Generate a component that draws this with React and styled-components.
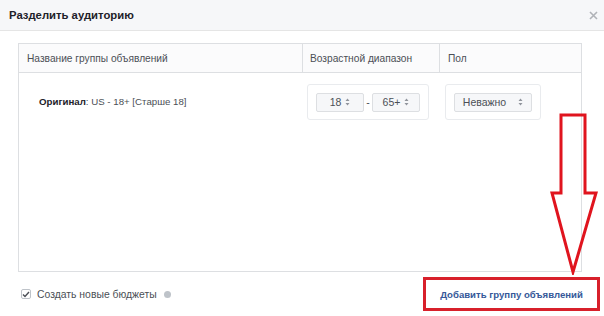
import React from "react";
import styled, { createGlobalStyle } from "styled-components";

const Global = createGlobalStyle`
  html, body { margin: 0; padding: 0; background: #fff; }
  body { font-family: "Liberation Sans", Arial, sans-serif; color: #4b4f56; }
  * { box-sizing: border-box; }
`;

const Dialog = styled.div`
  position: relative;
  width: 604px;
  height: 316px;
  background: #fff;
  display: flex;
  flex-direction: column;
  overflow: hidden;
`;

const Header = styled.div`
  height: 31px;
  flex: none;
  background: #f6f7f9;
  border-bottom: 1px solid #e5e5e5;
  display: flex;
  align-items: center;
  justify-content: space-between;
  padding: 0 6px 0 9px;
`;

const Title = styled.div`
  font-size: 11.3px;
  font-weight: bold;
  color: #1d2129;
`;

const Close = styled.div`
  width: 10px;
  height: 10px;
  display: flex;
  align-items: center;
  justify-content: center;
`;

const Body = styled.div`
  flex: none;
  padding: 12px 22px 0 18px;
`;

const Table = styled.div`
  height: 229px;
  border: 1px solid #dddfe2;
  display: grid;
  grid-template-columns: 283px 137px 1fr;
  grid-template-rows: 29px 1fr;
`;

const HeadCell = styled.div`
  display: flex;
  align-items: center;
  padding-left: ${(p) => p.$pad}px;
  font-size: 10.2px;
  color: #4b4f56;
  border-bottom: 1px solid #dddfe2;
  border-left: ${(p) => (p.$first ? "none" : "1px solid #dddfe2")};
  background: #fbfbfc;
`;

const Cell = styled.div`
  padding: 11px 0 0 ${(p) => p.$pad}px;
`;

const NameText = styled.div`
  font-size: 9.7px;
  color: #4b4f56;
  margin-top: 12px;
  & b { color: #1d2129; font-weight: bold; }
`;

const Group = styled.div`
  display: inline-flex;
  align-items: center;
  height: 36px;
  width: ${(p) => p.$w}px;
  padding: 0 0 0 8px;
  border: 1px solid #e9ebee;
  border-radius: 3px;
  background: #fff;
`;

const Select = styled.div`
  width: ${(p) => p.$w}px;
  height: 19px;
  background: #f6f7f9;
  border: 1px solid #dddfe2;
  border-radius: 2px;
  display: flex;
  align-items: center;
  justify-content: center;
  gap: ${(p) => p.$gap || 4}px;
  font-size: 10.5px;
  color: #4b4f56;
`;

const Dash = styled.span`
  width: 8px;
  text-align: center;
  font-size: 10.5px;
  color: #4b4f56;
`;

const Footer = styled.div`
  flex: 1;
  display: flex;
  align-items: center;
  justify-content: space-between;
  padding: 0 4px 0 21px;
`;

const CheckRow = styled.label`
  display: flex;
  align-items: center;
  gap: 6px;
  font-size: 10.4px;
  color: #4b4f56;
`;

const Box = styled.span`
  width: 10px;
  height: 10px;
  border: 1px solid #bec3c9;
  border-radius: 2px;
  background: #fff;
  display: flex;
  align-items: center;
  justify-content: center;
`;

const Info = styled.span`
  width: 7px;
  height: 7px;
  border-radius: 50%;
  background: #bec3c9;
  margin-left: 1px;
`;

const Highlight = styled.div`
  width: 177px;
  height: 34px;
  border: 3px solid #d8202b;
  display: flex;
  align-items: center;
  justify-content: center;
`;

const LinkButton = styled.button`
  border: none;
  background: none;
  padding: 0;
  font-family: inherit;
  font-size: 9.6px;
  font-weight: bold;
  color: #365899;
  cursor: pointer;
`;

const Arrow = styled.svg`
  position: absolute;
  left: 548px;
  top: 111px;
`;

const Updown = () => (
  <svg width="5" height="8" viewBox="0 0 5 8">
    <path d="M2.5 0.5 L4.5 3 H0.5 Z M2.5 7.5 L4.5 5 H0.5 Z" fill="#90949c" />
  </svg>
);

export default function App() {
  return (
    <>
      <Global />
      <Dialog>
        <Header>
          <Title>Разделить аудиторию</Title>
          <Close>
            <svg width="9" height="9" viewBox="0 0 9 9">
              <path d="M1 1 L8 8 M8 1 L1 8" stroke="#b0b3b8" strokeWidth="1.6" />
            </svg>
          </Close>
        </Header>
        <Body>
          <Table>
            <HeadCell $first $pad={8}>Название группы объявлений</HeadCell>
            <HeadCell $pad={7}>Возрастной диапазон</HeadCell>
            <HeadCell $pad={8}>Пол</HeadCell>
            <Cell $pad={20}>
              <NameText>
                <b>Оригинал</b>: US - 18+ [Старше 18]
              </NameText>
            </Cell>
            <Cell $pad={5}>
              <Group $w={122}>
                <Select $w={48}>18 <Updown /></Select>
                <Dash>-</Dash>
                <Select $w={48}>65+ <Updown /></Select>
              </Group>
            </Cell>
            <Cell $pad={6}>
              <Group $w={96}>
                <Select $w={78} $gap={12}>Неважно <Updown /></Select>
              </Group>
            </Cell>
          </Table>
        </Body>
        <Footer>
          <CheckRow>
            <Box>
              <svg width="8" height="7" viewBox="0 0 8 7">
                <path d="M1 3.5 L3 5.5 L7 1" stroke="#4b4f56" strokeWidth="1.4" fill="none" />
              </svg>
            </Box>
            Создать новые бюджеты
            <Info />
          </CheckRow>
          <Highlight>
            <LinkButton>Добавить группу объявлений</LinkButton>
          </Highlight>
        </Footer>
        <Arrow width="52" height="164" viewBox="548 111 52 164">
          <path
            d="M561 115 H585 V193 H596 L573 272 L552 193 H561 Z"
            fill="none"
            stroke="#e0141e"
            strokeWidth="3"
            strokeLinejoin="miter"
          />
        </Arrow>
      </Dialog>
    </>
  );
}
